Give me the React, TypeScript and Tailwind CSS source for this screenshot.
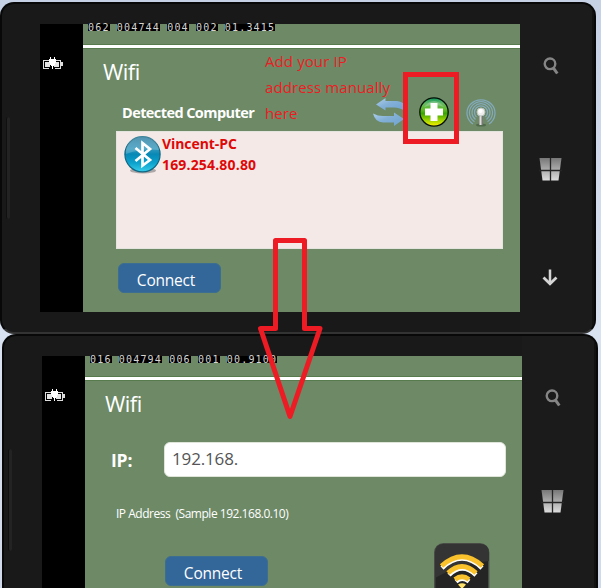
import type { ReactNode } from "react";

function Battery() {
  return (
    <svg className="block" width="20" height="12" viewBox="0 0 20 12" shapeRendering="crispEdges">
      <path d="M0 3h6v1H1v7h5v1H0zM12 3h6v2h2v4h-2v3h-6v-1h5V4h-5z" fill="#ddd" />
      <path d="M2 5h5v5H2zM11 5h5v5h-5z" fill="#e5e5e5" />
      <path d="M6 2h1V0h1v2h3V0h1v2h1v4h-1v2h-1v1h-1v3H9V9H8V8H7V6H6z" fill="#fff" />
    </svg>
  );
}

function SearchIcon() {
  return (
    <svg className="absolute left-[23px] top-[53px]" width="16" height="18" viewBox="0 0 16 18" fill="none">
      <circle cx="7" cy="6.800" r="5.300" stroke="#858585" strokeWidth="2.400" />
      <path d="M10.300 10.800L14.300 16.500" stroke="#858585" strokeWidth="3" />
    </svg>
  );
}

function WindowsIcon({ id }: { id: string }) {
  return (
    <svg className="absolute left-[19px] top-[154px]" width="23" height="23" viewBox="0 0 23 23">
      <defs>
        <linearGradient id={id} x1="0" y1="0" x2="0" y2="1">
          <stop offset="0" stopColor="#777" />
          <stop offset="1" stopColor="#ddd" />
        </linearGradient>
      </defs>
      <path d="M.5 0H22.500L19.500 22.500H3.500Z" fill={`url(#${id})`} />
      <path d="M11.500 0V23M0 12.500H23" stroke="#252525" strokeWidth="1.300" />
    </svg>
  );
}

function DownIcon() {
  return (
    <svg className="absolute left-[22px] top-[265px]" width="16" height="18" viewBox="0 0 16 18" fill="none" stroke="#d5d5d5">
      <path d="M8 .5V15" strokeWidth="2.500" />
      <path d="M1.500 8.500L8 14.800L14.500 8.500" strokeWidth="2.800" />
    </svg>
  );
}

function RefreshIcon() {
  return (
    <svg className="block" width="32" height="30" viewBox="0 0 32 30">
      <defs>
        <linearGradient id="refresh" x1="0" y1="0" x2="1" y2="1">
          <stop offset="0" stopColor="#b0cfeb" />
          <stop offset=".45" stopColor="#82afd6" />
          <stop offset="1" stopColor="#6ea3cf" />
        </linearGradient>
      </defs>
      <path d="M3 7.500L12.500 1V4H24Q29 4.500 32 8V14Q27 10.500 21 10.500H12.500V13.500Z" fill="url(#refresh)" />
      <path d="M0 16.500Q5 19 10 19H21V15.500L31 22L21 29V25.500H10Q2 25 0 16.500Z" fill="url(#refresh)" />
    </svg>
  );
}

function AddIcon() {
  return (
    <svg className="block" width="30" height="30" viewBox="0 0 30 30">
      <defs>
        <linearGradient id="add" x1="0" y1="0" x2="0" y2="1">
          <stop offset="0" stopColor="#07945b" />
          <stop offset=".2" stopColor="#66b965" />
          <stop offset=".42" stopColor="#60ba25" />
          <stop offset=".55" stopColor="#38a500" />
          <stop offset=".8" stopColor="#a2d500" />
          <stop offset="1" stopColor="#fff000" />
        </linearGradient>
      </defs>
      <circle cx="15" cy="15" r="14.200" fill="url(#add)" stroke="#071006" strokeWidth="1.300" />
      <path d="M5 10Q15-2 25 10Q15 6 5 10" fill="#fff" opacity=".22" />
      <path d="M11.500 6H18.500V11.500H24V18.500H18.500V24H11.500V18.500H6V11.500H11.500Z" fill="#fff" />
    </svg>
  );
}

function AntennaIcon() {
  return (
    <svg className="block" width="30" height="28" viewBox="0 0 30 28" fill="none">
      <ellipse cx="15" cy="26" rx="5" ry="1.500" fill="#3e5938" opacity=".6" />
      <g stroke="#83aaba" strokeWidth="1.250">
        <path d="M7 25A14 13.300 0 1 1 23 25" />
        <path d="M8.500 22.700A11.500 11 0 1 1 21.500 22.700" />
        <path d="M9.500 20.500A9 8.800 0 1 1 20.500 20.500" />
        <path d="M10.500 18A6.500 6.500 0 1 1 19.500 18" />
      </g>
      <path d="M15 14V26" stroke="#777" strokeWidth="3.800" />
      <path d="M14.500 14V26" stroke="#ddd" strokeWidth="2" />
      <circle cx="15" cy="13" r="4" fill="#eee" stroke="#bbc4c0" />
      <circle cx="14.500" cy="12" r="2" fill="#fff" />
    </svg>
  );
}

function BluetoothIcon() {
  return (
    <svg className="block shrink-0" width="40" height="38" viewBox="0 0 40 38">
      <defs>
        <linearGradient id="bluetooth" x1="0" y1="0" x2="0" y2="1">
          <stop offset="0" stopColor="#287a9e" />
          <stop offset=".35" stopColor="#3098bd" />
          <stop offset=".5" stopColor="#0788b5" />
          <stop offset=".75" stopColor="#0da2cd" />
          <stop offset="1" stopColor="#37cfec" />
        </linearGradient>
      </defs>
      <ellipse cx="20" cy="34.500" rx="13" ry="3" fill="#666" opacity=".5" />
      <circle cx="19.500" cy="18.300" r="17.600" fill="url(#bluetooth)" stroke="#0e6682" strokeWidth="1.200" />
      <path d="M3 18A16.500 16.500 0 0 1 36 14Q19 12 3 18" fill="#fff" opacity=".2" />
      <path d="M12.500 12L27 24L19.500 29.500V7L27 13L12.500 25" fill="none" stroke="#fff" strokeWidth="2.700" />
    </svg>
  );
}

function WifiAppIcon() {
  return (
    <svg className="block" width="56" height="58" viewBox="0 0 56 58">
      <rect x=".7" y=".7" width="54" height="57" rx="9" fill="#242424" stroke="#484b46" strokeWidth="1.400" />
      <path d="M1 35V10Q1 1 10 1H46Q55 1 55 10V18Q25 21 1 35Z" fill="#343434" />
      <g fill="none" stroke="#fff" strokeWidth="4.500">
        <path d="M8 25Q28 6 48 25" />
        <path d="M15 32Q28 19 42 32" />
        <path d="M22 38.500Q28 33 35 38.500" />
      </g>
      <g fill="none" stroke="#f9c22c" strokeWidth="4.800">
        <path d="M7.500 23Q28 4.500 48.500 23" />
        <path d="M14 30Q28 17 42 30" />
        <path d="M21 36.500Q28 31 35 36.500" />
      </g>
      <path d="M24 41.500Q28 39 32 41.500L28 46Z" fill="#ffe26b" />
    </svg>
  );
}

function Phone({ id, stats, children }: { id: string; stats: string[]; children: ReactNode }) {
  return (
    <section className="relative flex h-[332px] w-[596px] shrink-0 overflow-hidden rounded-[14px] border-2 border-[#080808] border-b-[#333] bg-[#191919]">
      <div className="flex w-[38px] shrink-0 items-center pl-[4px]">
        <div className="h-[102px] w-[4px] rounded-full border-l border-[#101010] bg-[#232323]" />
      </div>
      <div className="mt-[20px] flex h-[288px] w-[480px] shrink-0 bg-black">
        <div className="w-[43px] shrink-0 pl-[3px] pt-[33px]"><Battery /></div>
        <div className="w-[437px] bg-[#6d8966]">
          <div className="flex h-[7px] gap-[7.2px] pl-[5px] font-['DejaVu_Sans_Mono',monospace] text-[10px] leading-[7px] tracking-[1.18px] text-[#d4d4d4]">
            {stats.map((value, index) => <span key={index} className="h-[7px] bg-black">{value}</span>)}
          </div>
          <div className="mt-[13px] h-[5px] border-y border-[#587b4d] bg-white" />
          <h1 className="mt-[7px] h-[31px] pl-[20px] text-[22px] leading-[30px] tracking-[-0.5px]">Wifi</h1>
          {children}
        </div>
      </div>
      <div className="relative flex-1 border-r-2 border-[#111] bg-[#1b1b1b]">
        <SearchIcon /><WindowsIcon id={id} /><DownIcon />
      </div>
    </section>
  );
}

function ConnectButton() {
  return <button className="h-[30px] w-[103px] rounded-[6px] border border-[#3c6e91] bg-[#336699] pt-[4px] pr-[7px] text-center text-[15.5px] leading-[24px] tracking-[-0.2px] text-white">Connect</button>;
}

export default function App() {
  return (
    <main className="relative h-[588px] w-[603px] overflow-hidden bg-white font-['Open_Sans',sans-serif] text-white">
      <div className="flex h-full w-[601px] flex-col bg-[linear-gradient(#c6d1e6,#d9e2f0_57%,#d0d9e9)] pt-[2px]">
        <Phone id="windows-top" stats={["062", "004744", "004", "002", "01.3415"]}>
          <div className="flex h-[44px] items-end pl-[39px] pb-[4px]">
            <h2 className="mb-[2px] w-[251px] text-[14.5px] font-bold leading-[24px] tracking-[-0.58px]">Detected Computer</h2>
            <RefreshIcon />
            <div className="ml-[14px]"><AddIcon /></div>
            <div className="ml-[17px]"><AntennaIcon /></div>
          </div>
          <div className="ml-[33px] flex h-[118px] w-[387px] border border-[#e3e4dd] bg-[#f5e9e8] pl-[6px] pt-[4px]">
            <BluetoothIcon />
            <div className="-ml-px -mt-[2px] text-[14px] font-bold leading-[20px] text-[#df0806]">
              <p className="tracking-[-0.08px]">Vincent-PC</p><p className="mt-px tracking-[0.17px]">169.254.80.80</p>
            </div>
          </div>
          <div className="ml-[35px] mt-[14px]"><ConnectButton /></div>
        </Phone>
        <div className="pl-[2px]">
          <Phone id="windows-bottom" stats={["016", "004794", "006", "001", "00.9100"]}>
            <div className="mt-[22px] flex h-[36px] items-center pl-[26px]">
              <label className="mt-[2px] w-[53px] text-[17.5px] font-bold tracking-[-0.2px]">IP:</label>
              <div className="h-[35px] w-[342px] rounded-[6px] border border-[#dfe5d9] bg-white pl-[7px] text-[17px] leading-[32px] tracking-[-0.15px] text-[#555]">192.168.</div>
            </div>
            <p className="ml-[31px] mt-[27px] h-[20px] whitespace-pre text-[12px] leading-[20px] tracking-[-0.48px]">IP Address  (Sample 192.168.0.10)</p>
            <div className="mt-[19px] flex h-[58px] pl-[80px]">
              <div className="mt-[13px]"><ConnectButton /></div>
              <div className="ml-[166px]"><WifiAppIcon /></div>
            </div>
          </Phone>
        </div>
      </div>
      <p className="absolute left-[265px] top-[48px] w-[140px] text-[15px] leading-[26px] tracking-[0.1px] text-[#ed1c24]">Add your IP<br />address manually<br />here</p>
      <div className="absolute left-[403px] top-[72px] h-[72px] w-[56px] border-5 border-[#ed1c24]" />
      <svg className="absolute left-[256px] top-[236px]" width="68" height="186" viewBox="0 0 68 186" fill="none">
        <path d="M19.500 4.500H48.500V92.500H64L34 180.500L4.500 92.500H19.500Z" stroke="#ed1c24" strokeWidth="5" strokeLinejoin="round" />
      </svg>
    </main>
  );
}
